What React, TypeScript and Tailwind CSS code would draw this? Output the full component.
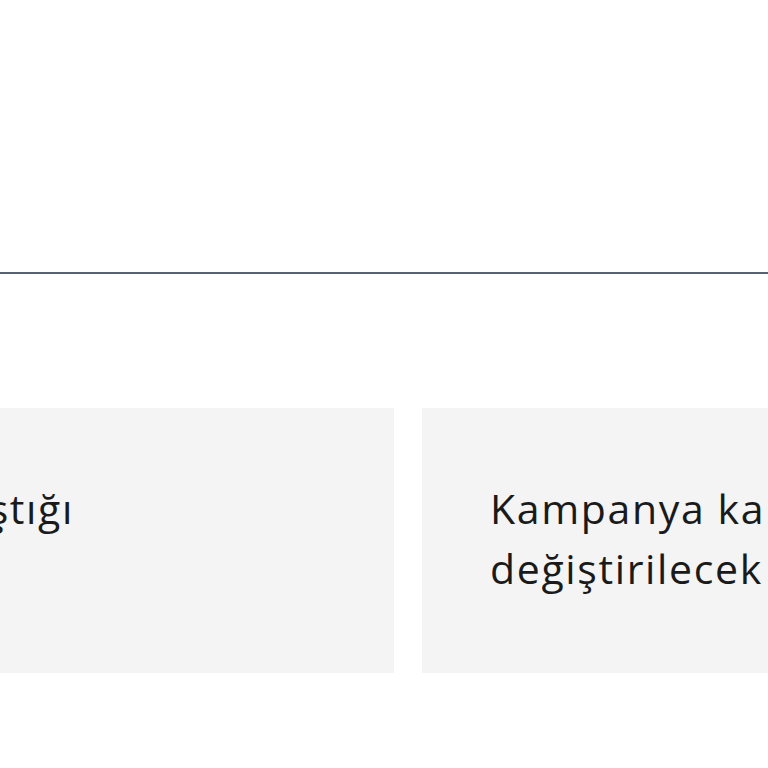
export default function App() {
  return (
    <div className="w-[768px] h-[768px] overflow-hidden bg-white" style={{ fontFamily: "'Open Sans', 'Noto Sans', sans-serif" }}>
      <div className="h-[272px]" />
      <div className="h-[2px] bg-[#566274]" />
      <div className="h-[134px]" />
      <div className="flex gap-[28px] ml-[-800px] w-[1800px]">
        <div className="w-[1194px] h-[265px] bg-[#f4f4f4] pr-[320px] pt-[70px] text-right">
          <p className="text-[41px] leading-[60px] tracking-[0.04em] text-[#1a1a1a] whitespace-nowrap">Kampanyanın hedeflerine ulaştığı</p>
        </div>
        <div className="w-[578px] h-[265px] bg-[#f4f4f4] pl-[68px] pt-[70px]">
          <p className="text-[41px] leading-[60px] tracking-[0.04em] text-[#1a1a1a] whitespace-nowrap">
            Kampanya kapsamında
            <br />
            değiştirilecek ürünler
          </p>
        </div>
      </div>
    </div>
  );
}
